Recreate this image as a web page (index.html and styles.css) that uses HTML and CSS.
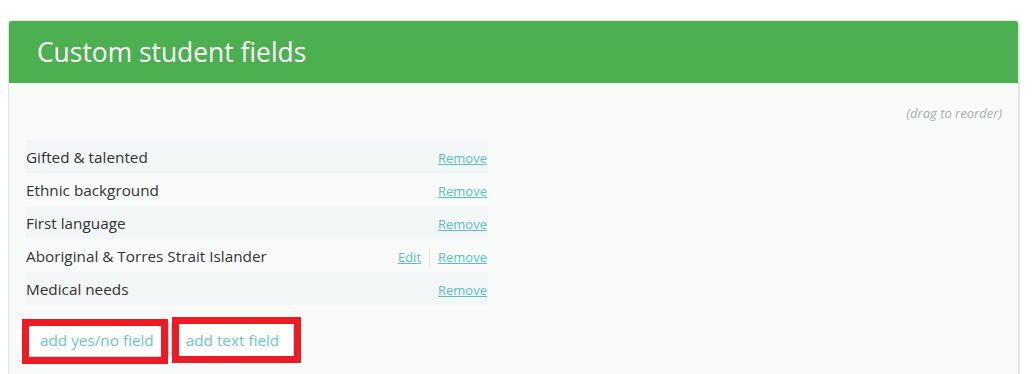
FILE: index.html
```html
<!DOCTYPE html>
<html lang="en">
<head>
  <meta charset="UTF-8" />
  <meta name="viewport" content="width=device-width, initial-scale=1.0" />
  <title>Custom student fields</title>
  <link rel="stylesheet" href="styles.css">
</head>
<body>
  <div class="panel">
    <div class="panel-head">
      <h2>Custom student fields</h2>
    </div>
    <div class="panel-body">
      <p class="hint">(drag to reorder)</p>
      <ul class="fields">
        <li class="field">
          <span class="name">Gifted &amp; talented</span>
          <span class="links"><a href="#">Remove</a></span>
        </li>
        <li class="field">
          <span class="name">Ethnic background</span>
          <span class="links"><a href="#">Remove</a></span>
        </li>
        <li class="field">
          <span class="name">First language</span>
          <span class="links"><a href="#">Remove</a></span>
        </li>
        <li class="field">
          <span class="name">Aboriginal &amp; Torres Strait Islander</span>
          <span class="links"><a href="#">Edit</a><a href="#" class="sep">Remove</a></span>
        </li>
        <li class="field">
          <span class="name">Medical needs</span>
          <span class="links"><a href="#">Remove</a></span>
        </li>
      </ul>
      <div class="actions">
        <button class="add-btn mark-yes">add yes/no field</button>
        <button class="add-btn mark-text">add text field</button>
      </div>
    </div>
  </div>
</body>
</html>
```

FILE: styles.css
```css
* {
  box-sizing: border-box;
  font-family: 'Open Sans', sans-serif;
}

body {
  margin: 0;
  padding: 20px 16px 0 8px;
  background: #fff;
  color: #333;
  overflow: hidden;
}

.panel {
  border: 1px solid #e1e5e5;
  border-right-width: 2px;
  border-radius: 4px 4px 0 0;
  background: #f9fbfb;
  min-height: 400px;
}

.panel-head {
  background: #4caf50;
  height: 62px;
  display: flex;
  align-items: center;
  padding-left: 28px;
  border-radius: 3px 3px 0 0;
}

.panel-head h2 {
  margin: 0;
  color: #fff;
  font-size: 26.4px;
  font-weight: 400;
}

.panel-body {
  padding: 22px 16px 16px 16px;
}

.hint {
  margin: 0 0 18px;
  text-align: right;
  font-size: 13px;
  line-height: 17px;
  font-style: italic;
  color: #a9acac;
}

.fields {
  list-style: none;
  margin: 0;
  padding: 0;
  width: 463px;
}

.field {
  display: flex;
  justify-content: space-between;
  align-items: center;
  height: 33px;
  padding: 0 1px;
  font-size: 15.3px;
}

.field:nth-child(odd) {
  background: #f3f6f6;
}

.links a {
  font-size: 13px;
  color: #5bc0be;
  text-decoration: underline;
}

.links .sep {
  margin-left: 8px;
  padding-left: 8px;
  border-left: 1px solid #dde5e5;
}

.actions {
  display: flex;
  gap: 2px;
  margin-top: 18px;
}

.add-btn {
  position: relative;
  height: 34px;
  padding: 0 14px;
  background: #fff;
  border: 1px solid #a6dcdb;
  color: #6cc6c5;
  font-size: 15.3px;
  cursor: pointer;
}

/* red highlight boxes drawn over the buttons */
.add-btn::after {
  content: "";
  position: absolute;
  border: 7px solid #ed1c24;
  pointer-events: none;
}

.mark-yes::after {
  left: -4px;
  right: 0;
  top: -5px;
  bottom: -8px;
}

.mark-text::after {
  left: 0;
  right: -8px;
  top: -7px;
  bottom: -7px;
}
```
